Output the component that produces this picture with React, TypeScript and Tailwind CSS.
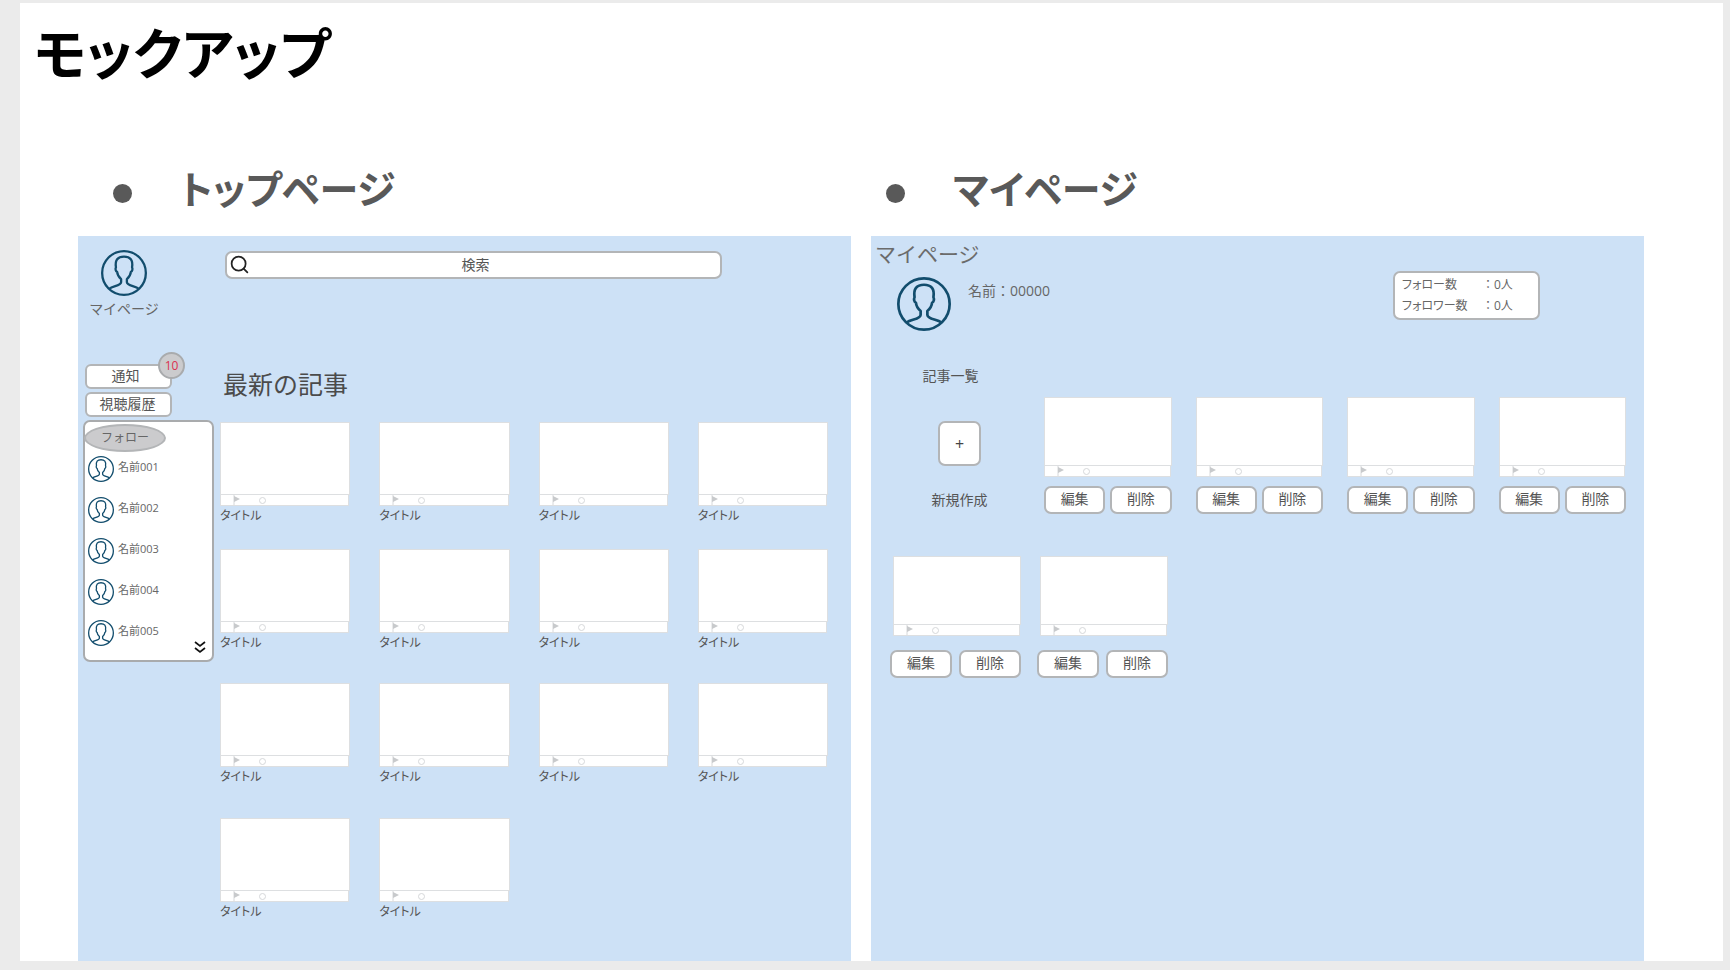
import { useState } from "react";
import { Search } from "lucide-react";

const followers = ["名前001", "名前002", "名前003", "名前004", "名前005"];
const latest = Array.from({ length: 14 }, (_, i) => i + 1);

function UserIcon({ className }: { className: string }) {
  return (
    <svg viewBox="0 0 160 160" fill="none" stroke="#124d6d" className={className} aria-hidden="true">
      <circle cx="80" cy="80" r="76" strokeWidth="8" />
      <path
        strokeWidth="8"
        strokeLinejoin="round"
        d="M28 135C42 124 69 126 70 112V101C62 94 57 86 56 76C51 74 49 66 52 60C48 35 58 23 80 23C102 23 112 35 108 60C111 66 109 74 104 76C103 86 98 94 90 101V112C91 126 118 124 132 135"
      />
    </svg>
  );
}

function Player({ label, small = false }: { label: string; small?: boolean }) {
  return (
    <div className="w-full">
      <div className={`border border-[#dddfe1] bg-white ${small ? "h-[69px]" : "h-[73px]"}`} />
      <div className="mr-px flex h-[11px] border border-t-0 border-[#dddfe1] bg-white">
        <button aria-label={`${label} 再生`} className="ml-3 h-full w-2">
          <svg viewBox="0 0 8 10" className="h-full w-full" aria-hidden="true">
            <path d="M1 0V10" stroke="#d6d8da" strokeWidth="1" />
            <path d="M1 1L7 4L1 7Z" fill="#c8cacc" />
          </svg>
        </button>
        <input
          type="range"
          defaultValue={0}
          aria-label={`${label} 再生位置`}
          className="ml-[18px] h-full w-0 flex-1 appearance-none bg-transparent [&::-webkit-slider-thumb]:size-[7px] [&::-webkit-slider-thumb]:appearance-none [&::-webkit-slider-thumb]:rounded-full [&::-webkit-slider-thumb]:border [&::-webkit-slider-thumb]:border-[#d6d8da] [&::-webkit-slider-thumb]:bg-white"
        />
      </div>
    </div>
  );
}

function EditButtons({ gap }: { gap: string }) {
  const style =
    "h-7 w-[62px] rounded-[7px] border-2 border-[#b3b5b7] bg-white pb-[3px] text-sm leading-5 text-[#555]";
  return (
    <div className={`flex ${gap}`}>
      <button className={style}>編集</button>
      <button className={style}>削除</button>
    </div>
  );
}

function TopPage() {
  const [query, setQuery] = useState("");

  return (
    <section className="flex bg-[#cde1f6]">
      {/* Sidebar */}
      <aside className="w-[142px] shrink-0 pl-[5px]">
        <a href="#mypage" className="ml-[5px] mt-[14px] flex w-[72px] flex-col items-center">
          <UserIcon className="size-[46px]" />
          <span className="mt-[3px] whitespace-nowrap text-sm text-[#666]">マイページ</span>
        </a>

        <div className="relative ml-[2px] mt-[45px] w-[87px]">
          <button className="block h-[25px] w-full rounded-md border-2 border-[#b3b5b7] bg-white pb-[2px] pr-[6px] text-sm leading-5 text-[#555]">
            通知
          </button>
          <span className="absolute -right-[13px] -top-[12px] flex size-[27px] items-center justify-center rounded-full border-2 border-[#a9abad] bg-[#cbcbcd] font-['Open_Sans'] text-xs text-[#dc3050]">
            10
          </span>
          <button className="mt-[3px] block h-[25px] w-full rounded-md border-2 border-[#b3b5b7] bg-white pb-[2px] pr-[2px] text-sm leading-5 text-[#555]">
            視聴履歴
          </button>
        </div>

        <div className="relative mt-[3px] h-[242px] w-[131px] rounded-[7px] border-2 border-[#a9abad] bg-white">
          <h3 className="-ml-px mt-[2px] flex h-7 w-[82px] items-center justify-center rounded-[50%] border-2 border-[#b3b5b7] bg-[#cbcbcd] text-xs text-[#666]">
            フォロー
          </h3>
          <ul className="mt-[4px] pl-[3px]">
            {followers.map((name) => (
              <li key={name} className="flex h-[41px] items-start gap-1">
                <UserIcon className="size-[26px]" />
                <span className="mt-px text-[11px] leading-5 text-[#666]">{name}</span>
              </li>
            ))}
          </ul>
          <button aria-label="もっと見る" className="absolute bottom-[5px] right-[5px] size-[14px]">
            <svg viewBox="0 0 14 14" fill="none" stroke="#111" strokeWidth="1.7" aria-hidden="true">
              <path d="M2 1L7 5L12 1M2 7L7 11L12 7" />
            </svg>
          </button>
        </div>
      </aside>

      {/* Articles */}
      <div className="min-w-0 flex-1 pr-[23px]">
        <label className="relative ml-[5px] mr-[106px] mt-[15px] block">
          <Search className="absolute left-[4px] top-[3px] size-[21px] text-[#222]" strokeWidth={2} />
          <input
            type="text"
            aria-label="検索"
            placeholder="検索"
            value={query}
            onChange={(e) => setQuery(e.target.value)}
            className="block h-7 w-full rounded-[7px] border-2 border-[#b3b5b7] bg-white pb-[2px] pl-1 text-center text-sm placeholder:text-[#555]"
          />
        </label>
        <h3 className="ml-[3px] mt-[87px] text-[25px] leading-9 text-[#4b4b4b]">最新の記事</h3>
        <div className="mt-5 grid grid-cols-4 grid-rows-[127px_134px_135px_auto] gap-x-[29px]">
          {latest.map((n) => (
            <article key={n}>
              <Player label={`記事${n}`} />
              <h4 className="mt-px text-xs leading-[18px] text-[#555] [font-feature-settings:'palt']">タイトル</h4>
            </article>
          ))}
        </div>
      </div>
    </section>
  );
}

function MyPage() {
  return (
    <section id="mypage" className="bg-[#cde1f6]">
      <h3 className="ml-1 pt-1 text-[21px] leading-7 text-[#6b6b6b]">マイページ</h3>
      <div className="flex items-start">
        <UserIcon className="ml-[26px] mt-[9px] size-[54px]" />
        <p className="ml-[17px] mt-[13px] text-sm leading-5 text-[#666]">
          名前：<span className="font-['Open_Sans']">00000</span>
        </p>
        <dl className="ml-auto mr-[104px] mt-[3px] grid h-[49px] w-[147px] grid-cols-[80px_auto] content-center gap-y-px rounded-[7px] border-2 border-[#b3b5b7] bg-white pl-[7px] text-xs leading-5 text-[#666]">
          <dt className="[font-feature-settings:'palt']">フォロー数</dt>
          <dd>：0人</dd>
          <dt className="[font-feature-settings:'palt']">フォロワー数</dt>
          <dd>：0人</dd>
        </dl>
      </div>

      {/* Own articles */}
      <div className="mt-[35px] flex">
        <div className="flex w-[173px] shrink-0 flex-col items-center">
          <h4 className="mr-[14px] text-sm leading-5 text-[#555]">記事一覧</h4>
          <button
            aria-labelledby="new-article"
            className="ml-1 mt-[35px] h-[45px] w-[43px] rounded-[7px] border-2 border-[#b3b5b7] bg-white text-base text-[#444]"
          >
            +
          </button>
          <span id="new-article" className="ml-1 mt-[24px] text-sm leading-5 text-[#555]">
            新規作成
          </span>
        </div>
        <div className="mt-[31px] grid flex-1 grid-cols-4 gap-x-[24px] pr-[18px]">
          {[1, 2, 3, 4].map((n) => (
            <article key={n} className="flex flex-col gap-[9px]">
              <Player label={`自分の記事${n}`} small />
              <EditButtons gap="gap-[5px]" />
            </article>
          ))}
        </div>
      </div>
      <div className="ml-[19px] mt-[42px] flex gap-4">
        {[5, 6].map((n) => (
          <article key={n} className="w-[131px]">
            <div className="mb-[14px] pl-[3px]">
              <Player label={`自分の記事${n}`} small />
            </div>
            <EditButtons gap="gap-[7px]" />
          </article>
        ))}
      </div>
    </section>
  );
}

export default function App() {
  return (
    <div className="flex min-h-screen bg-[#ebebeb] pb-[9px] pl-5 pr-[7px] pt-[3px] font-['Open_Sans','Noto_Sans_CJK_JP',sans-serif]">
      <main className="flex flex-1 flex-col bg-white">
        <h1 className="ml-[14px] mt-2 text-[55px] font-bold leading-[84px] text-black [font-feature-settings:'palt']">
          モックアップ
        </h1>
        <ul className="ml-[93px] mr-[64px] mt-[62px] grid grid-cols-2 text-[39px] font-bold leading-[64px] text-[#595959] [font-feature-settings:'palt']">
          {["トップページ", "マイページ"].map((title) => (
            <li key={title} className="flex items-center">
              <span className="mr-[48px] mt-2 size-[19px] rounded-full bg-[#595959]" />
              <h2>{title}</h2>
            </li>
          ))}
        </ul>
        <div className="ml-[58px] mr-[79px] mt-[15px] grid flex-1 grid-cols-2 gap-5">
          <TopPage />
          <MyPage />
        </div>
      </main>
    </div>
  );
}
